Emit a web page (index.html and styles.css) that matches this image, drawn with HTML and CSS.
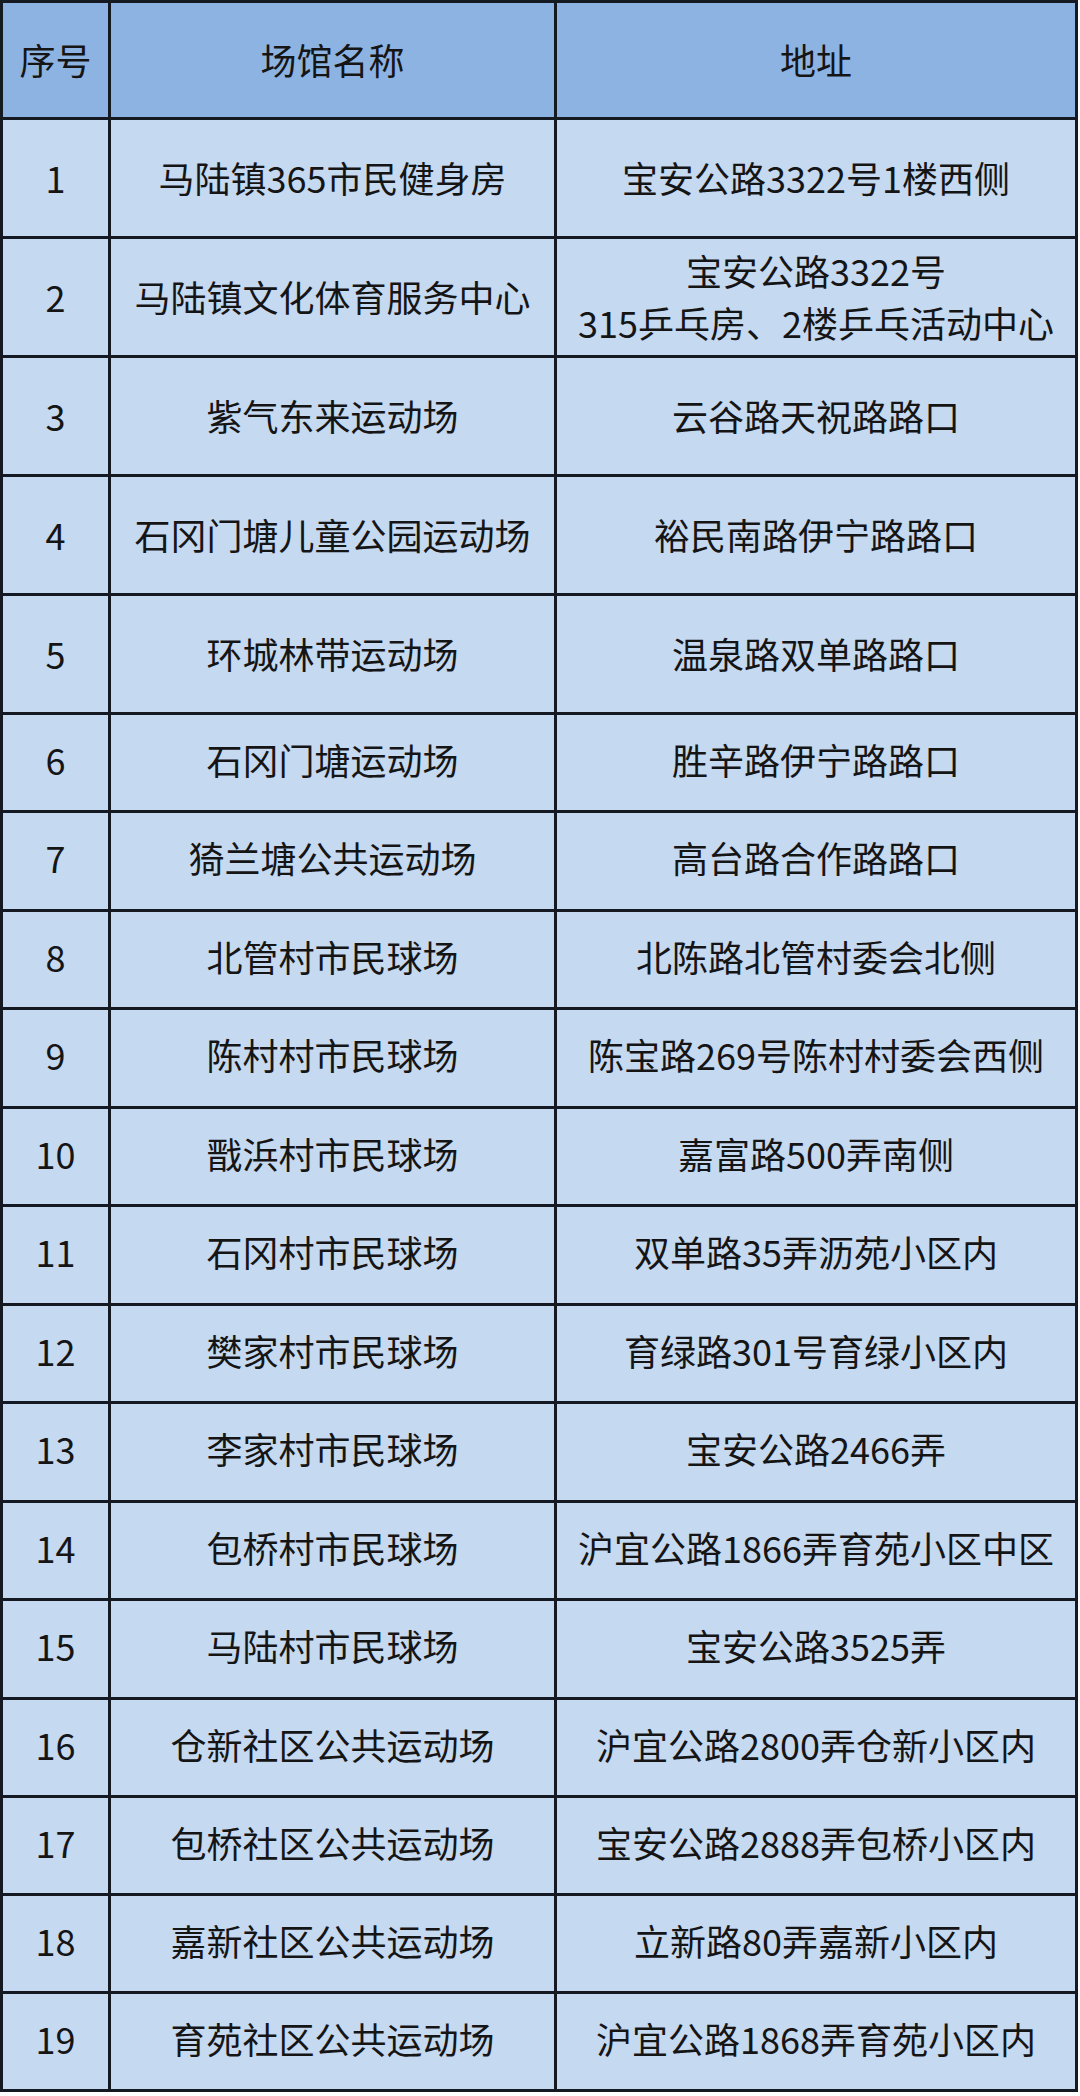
FILE: index.html
```html
<!DOCTYPE html>
<html lang="zh-CN">
<head>
<meta charset="utf-8">
<title>场馆列表</title>
<link rel="stylesheet" href="styles.css">
</head>
<body>
<div class="table">
  <div class="cell head">序号</div><div class="cell head">场馆名称</div><div class="cell head">地址</div>
  <div class="cell">1</div><div class="cell">马陆镇365市民健身房</div><div class="cell">宝安公路3322号1楼西侧</div>
  <div class="cell">2</div><div class="cell">马陆镇文化体育服务中心</div><div class="cell">宝安公路3322号<br>315乒乓房、2楼乒乓活动中心</div>
  <div class="cell">3</div><div class="cell">紫气东来运动场</div><div class="cell">云谷路天祝路路口</div>
  <div class="cell">4</div><div class="cell">石冈门塘儿童公园运动场</div><div class="cell">裕民南路伊宁路路口</div>
  <div class="cell">5</div><div class="cell">环城林带运动场</div><div class="cell">温泉路双单路路口</div>
  <div class="cell">6</div><div class="cell">石冈门塘运动场</div><div class="cell">胜辛路伊宁路路口</div>
  <div class="cell">7</div><div class="cell">猗兰塘公共运动场</div><div class="cell">高台路合作路路口</div>
  <div class="cell">8</div><div class="cell">北管村市民球场</div><div class="cell">北陈路北管村委会北侧</div>
  <div class="cell">9</div><div class="cell">陈村村市民球场</div><div class="cell">陈宝路269号陈村村委会西侧</div>
  <div class="cell">10</div><div class="cell">戬浜村市民球场</div><div class="cell">嘉富路500弄南侧</div>
  <div class="cell">11</div><div class="cell">石冈村市民球场</div><div class="cell">双单路35弄沥苑小区内</div>
  <div class="cell">12</div><div class="cell">樊家村市民球场</div><div class="cell">育绿路301号育绿小区内</div>
  <div class="cell">13</div><div class="cell">李家村市民球场</div><div class="cell">宝安公路2466弄</div>
  <div class="cell">14</div><div class="cell">包桥村市民球场</div><div class="cell">沪宜公路1866弄育苑小区中区</div>
  <div class="cell">15</div><div class="cell">马陆村市民球场</div><div class="cell">宝安公路3525弄</div>
  <div class="cell">16</div><div class="cell">仓新社区公共运动场</div><div class="cell">沪宜公路2800弄仓新小区内</div>
  <div class="cell">17</div><div class="cell">包桥社区公共运动场</div><div class="cell">宝安公路2888弄包桥小区内</div>
  <div class="cell">18</div><div class="cell">嘉新社区公共运动场</div><div class="cell">立新路80弄嘉新小区内</div>
  <div class="cell">19</div><div class="cell">育苑社区公共运动场</div><div class="cell">沪宜公路1868弄育苑小区内</div>
</div>
</body>
</html>
```

FILE: styles.css
```css
html, body {
  margin: 0;
  padding: 0;
  background: #ffffff;
}

.table {
  width: 1078px;
  box-sizing: border-box;
  display: grid;
  grid-template-columns: 105px 443px 518px;
  grid-template-rows: 114px repeat(5, 116px) 95px 96px 95px 96px 95px 96px 95px 96px 95px 96px 95px 95px 95px 95px;
  gap: 3px;
  padding: 3px;
  background: #151a22;
  font-family: "Noto Sans CJK SC", "Noto Sans", sans-serif;
  font-size: 36px;
  color: #151515;
}

.cell {
  display: flex;
  align-items: center;
  justify-content: center;
  text-align: center;
  line-height: 52px;
  background: #c5d9f1;
  padding-bottom: 2px;
  box-sizing: border-box;
}

.cell:nth-child(n+19) {
  padding-bottom: 8px;
}

.head {
  background: #8db3e2;
}
```
